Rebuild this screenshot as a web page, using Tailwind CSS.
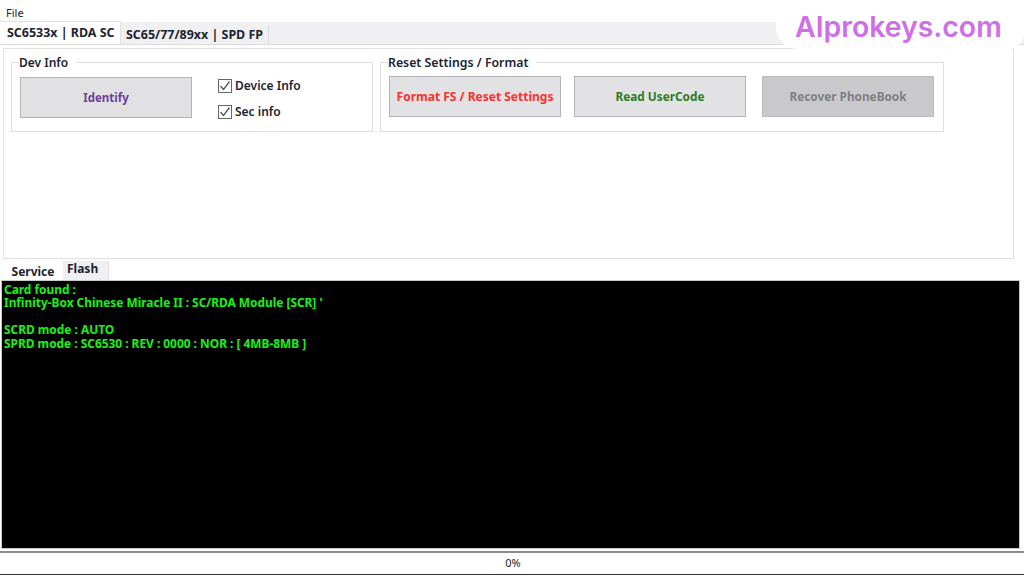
<!DOCTYPE html>
<html>
<head>
<meta charset="utf-8">
<script src="https://cdn.jsdelivr.net/npm/@tailwindcss/browser@4"></script>
</head>
<body class="w-[1024px] h-[576px] overflow-hidden bg-white relative font-['Noto_Sans','Liberation_Sans',sans-serif]">
    <!-- menu -->
    <div class="h-[22px] pl-[6px] pt-[4px] text-[11px] leading-[18px] text-[#222]">File</div>

    <!-- top tabs -->
    <div class="h-[23px] bg-[#f0f0f2] flex items-end border-b border-[#dcdce0] font-bold text-[12.45px] text-[#1c2430]">
        <div class="w-[121px] h-[23px] bg-white pl-[7px] pt-[1px] leading-[20px] border-t border-r border-[#e2e2e6]">SC6533x | RDA SC</div>
        <div class="w-[147px] h-[19px] ml-[1px] bg-[#f0f0f0] pl-[4px] leading-[20px] border-r border-[#dcdce0]">SC65/77/89xx | SPD FP</div>
    </div>

    <!-- main panel -->
    <div class="ml-[3px] mt-[3px] w-[1011px] h-[211px] border border-[#e2e2e6] pl-[7px] pt-[7px] flex gap-[7px] items-start">
        <fieldset class="w-[362px] h-[76px] border border-[#dedee4] pl-[8px] flex">
            <legend class="ml-[-1px] pr-[8px] text-[12px] leading-[12px] font-semibold text-[#1c2430] translate-y-[1px]">Dev Info</legend>
            <button class="w-[172px] h-[41px] mt-[9px] bg-[#e1e1e3] border border-[#b4b4b8] text-[11.5px] font-bold text-[#6f3f97]">Identify</button>
            <div class="ml-[26px] mt-[11px] flex flex-col gap-[12px] text-[12px] font-semibold text-[#1c2430]">
                <label class="flex items-center gap-[3px] h-[14px]">
                    <svg class="w-[14px] h-[14px]" viewBox="0 0 14 14"><rect x="0.5" y="0.5" width="13" height="13" fill="#fff" stroke="#666"/><path d="M2.5 7l3 3.5 6-8" fill="none" stroke="#555" stroke-width="1.3"/></svg>
                    Device Info
                </label>
                <label class="flex items-center gap-[3px] h-[14px]">
                    <svg class="w-[14px] h-[14px]" viewBox="0 0 14 14"><rect x="0.5" y="0.5" width="13" height="13" fill="#fff" stroke="#666"/><path d="M2.5 7l3 3.5 6-8" fill="none" stroke="#555" stroke-width="1.3"/></svg>
                    Sec info
                </label>
            </div>
        </fieldset>
        <fieldset class="w-[564px] h-[76px] border border-[#dedee4] pl-[8px] flex">
            <legend class="ml-[-1px] pr-[8px] text-[12.3px] leading-[12px] font-semibold text-[#1c2430] translate-y-[1px]">Reset Settings / Format</legend>
            <button class="w-[172px] h-[41px] mt-[8px] bg-[#e2e2e4] border border-[#b4b4b8] text-[12px] font-bold text-[#f5322d]">Format FS / Reset Settings</button>
            <button class="w-[172px] h-[41px] mt-[8px] ml-[13px] bg-[#e2e2e4] border border-[#b4b4b8] text-[11.8px] font-bold text-[#2e7d22]">Read UserCode</button>
            <button class="w-[172px] h-[41px] mt-[8px] ml-[16px] bg-[#c9c9cc] border border-[#bcbcc0] text-[11.8px] font-bold text-[#808084]">Recover PhoneBook</button>
        </fieldset>
    </div>

    <!-- bottom tabs -->
    <div class="h-[21px] pl-[4px] flex items-end font-bold text-[12px] text-[#1c2430]">
        <div class="w-[58px] h-[19px] bg-white text-center leading-[22px]">Service</div>
        <div class="w-[46px] h-[19px] ml-[1px] bg-[#f0f0f2] pl-[4px] leading-[16px] border-r border-[#e2e2e6]">Flash</div>
    </div>

    <!-- log -->
    <div class="ml-[1px] w-[1019px] h-[269px] bg-black border border-[#c8c8c8] px-[2px] pt-[2px] text-[11.9px] leading-[13.4px] font-bold text-[#1cf01c]">
        <div>Card found :</div>
        <div>Infinity-Box Chinese Miracle II : SC/RDA Module [SCR] '</div>
        <div class="h-[13.4px]"></div>
        <div>SCRD mode : AUTO</div>
        <div>SPRD mode : SC6530 : REV : 0000 : NOR : [ 4MB-8MB ]</div>
    </div>

    <!-- status -->
    <div class="mt-[2px] h-[2px] bg-[#8c8c8c]"></div>
    <div class="h-[22px] border-b border-[#333] pl-[2px] text-center text-[11px] leading-[19px] text-[#222]">0%</div>

    <!-- watermark -->
    <div class="absolute right-0 top-0 w-[248px] h-[49px] bg-white rounded-bl-[22px] rounded-br-[16px] pl-[19px] text-[28.4px] leading-[54px] font-['Inter',sans-serif] font-semibold text-[#cf6fe8]">AIprokeys.com</div>
</body>
</html>
